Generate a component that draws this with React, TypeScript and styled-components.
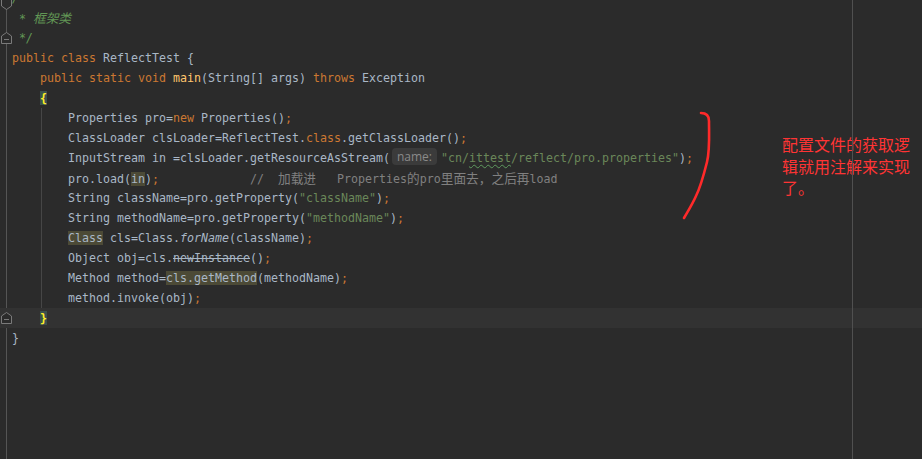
import * as React from 'react';
import styled, { createGlobalStyle, css } from 'styled-components';

const GlobalStyle = createGlobalStyle`
    html, body {
        margin: 0;
        padding: 0;
        background: #2b2b2b;
        overflow: hidden;
    }
`;

const Editor = styled.div`
    position: relative;
    width: 922px;
    height: 459px;
    overflow: hidden;
    background: #2b2b2b;
    font-family: "DejaVu Sans Mono", "Noto Sans CJK SC", monospace;
    font-size: 11.63px;
    color: #a9b7c6;

    &::after {
        content: '';
        position: absolute;
        top: 0;
        bottom: 0;
        left: 852px;
        width: 1px;
        background: #505050;
    }
`;

const Lines = styled.div`
    display: flex;
    flex-direction: column;
    margin-top: -12px;
    background: linear-gradient(#555, #555) no-repeat 6px 0 / 1px 100%;
    min-height: 480px;
`;

const Row = styled.div<{ $current?: boolean; $guide?: boolean }>`
    display: flex;
    height: 20px;
    line-height: 20px;
    white-space: pre;
    ${p => p.$current && css`
        background: #323232;
    `}
`;

const GutterCell = styled.div`
    width: 12px;
    flex: none;
    display: flex;
    align-items: center;
    justify-content: center;
`;

const Code = styled.div<{ $guide?: boolean }>`
    flex: 1;
    ${p => p.$guide && css`
        background: linear-gradient(#464646, #464646) no-repeat 29px 0 / 1px 100%;
    `}
`;

const Kw = styled.span`
    color: #cc7832;
`;
const Str = styled.span`
    color: #6a8759;
`;
const Cmt = styled.span`
    color: #808080;
`;
const Doc = styled.span`
    color: #629755;
    font-style: italic;
`;
const Decl = styled.span`
    color: #ffc66d;
`;
const Ital = styled.span`
    font-style: italic;
`;
const Strike = styled.span`
    text-decoration: line-through;
`;
const Usage = styled.span`
    background: #4c4a36;
`;
const Brace = styled.span`
    background: #3b514d;
    color: #ffef28;
    font-weight: bold;
`;
const Typo = styled.span`
    text-decoration: underline wavy #5f9a5f;
    text-decoration-thickness: 1px;
    text-underline-offset: 2px;
`;
const Cjk = styled.span`
    font-family: "Noto Sans CJK SC", sans-serif;
    font-size: 12.7px;
`;
const Hint = styled.span`
    display: inline-block;
    height: 17px;
    line-height: 17px;
    margin: 0 4px 0 2px;
    padding: 0 5px;
    border-radius: 4px;
    background: #3b3b3b;
    color: #8a8a8a;
    font-family: "Open Sans", "Noto Sans", sans-serif;
    font-size: 12px;
    vertical-align: 1px;
`;

const Annotation = styled.div`
    position: absolute;
    left: 680px;
    top: 108px;
    display: flex;
    gap: 68px;
`;
const Note = styled.div`
    margin-top: 26px;
    width: 130px;
    color: #ff3434;
    font-family: "Noto Sans CJK SC", sans-serif;
    font-size: 16px;
    line-height: 21.5px;
`;

const FoldEnd = () => (
    <svg width="11" height="12" viewBox="0 0 11 12">
        <path d="M0.5 4 L5.5 0.5 L10.5 4 V11.5 H0.5 Z" fill="#2b2b2b" stroke="#7a7a7a" />
        <path d="M3 7.5 H8" stroke="#7a7a7a" />
    </svg>
);

const FoldStart = () => (
    <svg width="11" height="12" viewBox="0 0 11 12" style={{ marginTop: 12 }}>
        <path d="M0.5 0.5 H10.5 V8 L5.5 11.5 L0.5 8 Z" fill="#2b2b2b" stroke="#7a7a7a" />
    </svg>
);

const Line = ({ fold, current, guide, children }: {
    fold?: React.ReactNode;
    current?: boolean;
    guide?: boolean;
    children?: React.ReactNode;
}) => (
    <Row $current={current}>
        <GutterCell>{fold}</GutterCell>
        <Code $guide={guide}>{children}</Code>
    </Row>
);

export default function App() {
    return (
        <>
            <GlobalStyle />
            <Editor>
                <Lines>
                    <Line fold={<FoldStart />}><Doc>/**</Doc></Line>
                    <Line><Doc> * <Cjk>框架类</Cjk></Doc></Line>
                    <Line fold={<FoldEnd />}><Doc> */</Doc></Line>
                    <Line><Kw>public class</Kw> ReflectTest {'{'}</Line>
                    <Line>    <Kw>public static void</Kw> <Decl>main</Decl>(String[] args) <Kw>throws</Kw> Exception</Line>
                    <Line>    <Brace>{'{'}</Brace></Line>
                    <Line guide>        Properties pro=<Kw>new</Kw> Properties()<Kw>;</Kw></Line>
                    <Line guide>        ClassLoader clsLoader=ReflectTest.<Kw>class</Kw>.getClassLoader()<Kw>;</Kw></Line>
                    <Line guide>        InputStream in =clsLoader.getResourceAsStream(<Hint>name:</Hint><Str>"cn/<Typo>ittest</Typo>/reflect/pro.properties"</Str>)<Kw>;</Kw></Line>
                    <Line guide>        pro.load(<Usage>in</Usage>)<Kw>;</Kw>             <Cmt>//  <Cjk>加载进</Cjk>   Properties<Cjk>的</Cjk>pro<Cjk>里面去，之后再</Cjk>load</Cmt></Line>
                    <Line guide>        String className=pro.getProperty(<Str>"className"</Str>)<Kw>;</Kw></Line>
                    <Line guide>        String methodName=pro.getProperty(<Str>"methodName"</Str>)<Kw>;</Kw></Line>
                    <Line guide>        <Usage>Class</Usage> cls=Class.<Ital>forName</Ital>(className)<Kw>;</Kw></Line>
                    <Line guide>        Object obj=cls.<Strike>newInstance</Strike>()<Kw>;</Kw></Line>
                    <Line guide>        Method method=<Usage>cls.getMethod</Usage>(methodName)<Kw>;</Kw></Line>
                    <Line guide>        method.invoke(obj)<Kw>;</Kw></Line>
                    <Line current fold={<FoldEnd />}>    <Brace>{'}'}</Brace></Line>
                    <Line>{'}'}</Line>
                </Lines>
                <Annotation>
                    <svg width="34" height="116" viewBox="680 108 34 116">
                        <path
                            d="M701 113 C705 113 709 114 709 121 C709 135 710 150 707 162 C704 174 701 186 696 196 C692 205 688 211 684 218"
                            fill="none"
                            stroke="#ff2a2a"
                            strokeWidth="2.6"
                            strokeLinecap="round"
                        />
                    </svg>
                    <Note>配置文件的获取逻辑就用注解来实现了。</Note>
                </Annotation>
            </Editor>
        </>
    );
}
